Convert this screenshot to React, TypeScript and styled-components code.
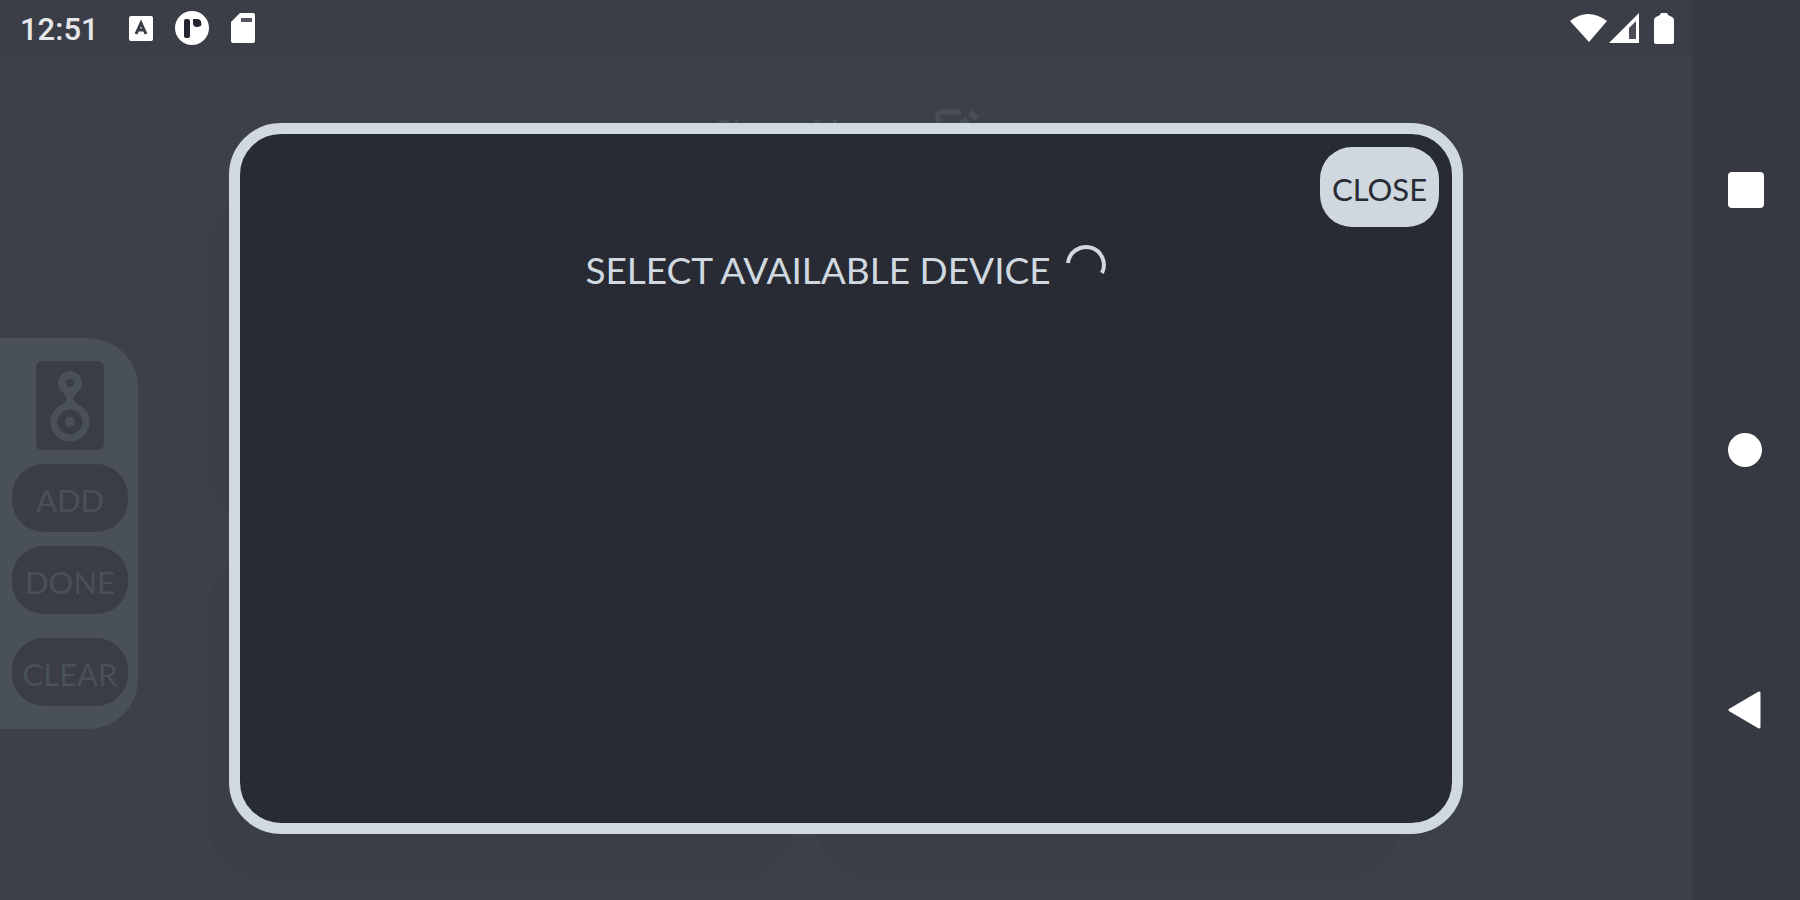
import React from "react";
import styled, { createGlobalStyle } from "styled-components";

const Global = createGlobalStyle`
  * { box-sizing: border-box; }
  html, body, #root { height: 100%; margin: 0; }
  body { background: #3d4048; font-family: Lato, "Open Sans", sans-serif; }
  button { font: inherit; border: 0; padding: 0; cursor: pointer; }
  svg { display: block; flex: none; }
`;

const Screen = styled.div`
  display: flex;
  min-height: 100%;
  background: #3d4048;
`;

const Main = styled.main`
  position: relative;
  flex: 1;
  display: flex;
  flex-direction: column;
`;

const StatusBar = styled.header`
  display: flex;
  align-items: center;
  justify-content: space-between;
  height: 56px;
  padding: 0 17px 0 20px;
  background: #3b3e47;
  color: #fff;
`;

const StatusGroup = styled.div<{ $gap: number }>`
  display: flex;
  align-items: center;
  gap: ${(p) => p.$gap}px;
`;

const Clock = styled.time`
  width: 87px;
  padding-top: 4px;
  font: 500 31px/40px Roboto, sans-serif;
  color: #e6e7ea;
`;

const ShowHeader = styled.div`
  display: flex;
  align-items: center;
  justify-content: center;
  height: 111px;
  padding-top: 40px;
  gap: 28px;
  color: #484e55;
`;

const ShowName = styled.h2`
  margin: 0;
  font-size: 37px;
  font-weight: 400;
  line-height: 48px;
`;

const EditButton = styled.button`
  display: flex;
  background: none;
  color: inherit;
`;

const Workspace = styled.div`
  flex: 1;
  display: flex;
  align-items: center;
`;

const SidePanel = styled.aside`
  display: flex;
  flex-direction: column;
  align-items: center;
  width: 138px;
  padding: 23px 10px 23px 12px;
  gap: 14px;
  border-radius: 0 50px 50px 0;
  background: #495057;
`;

const PillButton = styled.button`
  padding-top: 4px;
  border-radius: 32px;
  font-size: 31px;
  line-height: 40px;
`;

const SideButton = styled(PillButton)<{ $apart?: boolean }>`
  width: 100%;
  height: 68px;
  margin-top: ${(p) => (p.$apart ? 10 : 0)}px;
  background: #3a3d46;
  color: #485058;
`;

const CloseButton = styled(PillButton)`
  align-self: flex-end;
  width: 119px;
  height: 80px;
  background: #cfd8de;
  color: #282b33;
`;

const CardGrid = styled.div`
  flex: 1;
  align-self: stretch;
  display: grid;
  grid-template: 1fr 1fr / 1fr 1fr;
  gap: 24px;
  padding: 26px 292px 20px 71px;
`;

const Card = styled.div`
  border-radius: 56px;
  background: #3b3e46;
`;

const Overlay = styled.div`
  position: absolute;
  inset: 123px 229px 66px;
  display: flex;
`;

const Dialog = styled.section`
  flex: 1;
  display: flex;
  flex-direction: column;
  padding: 13px;
  border: 11px solid #d1d9e0;
  border-radius: 52px;
  background: #282b33;
`;

const TitleRow = styled.div`
  display: flex;
  justify-content: center;
  gap: 14px;
  margin-top: 16px;
`;

const Title = styled.h1`
  margin: 0;
  color: #d1d9e0;
  font-size: 37px;
  font-weight: 400;
  line-height: 54px;
`;

const NavBar = styled.nav`
  display: flex;
  flex-direction: column;
  align-items: center;
  justify-content: center;
  gap: 220px;
  width: 108px;
  background: #363942;
`;

const NavButton = styled.button`
  display: flex;
  background: none;
`;

function Speaker() {
  return (
    <svg width="68" height="89" viewBox="0 0 68 89" aria-hidden="true">
      <rect width="68" height="89" rx="6" fill="#3a3d46" />
      <path d="M26 29 H42 L37 38 L45 49 H23 L31 38 Z" fill="#495057" />
      <circle cx="34" cy="22" r="8" fill="#3a3d46" stroke="#495057" strokeWidth="8" />
      <circle cx="34" cy="61" r="16" fill="#3a3d46" stroke="#495057" strokeWidth="7" />
      <circle cx="34" cy="61" r="5" fill="#495057" />
    </svg>
  );
}

function EditIcon() {
  return (
    <svg width="44" height="48" viewBox="0 0 44 48" aria-hidden="true">
      <path
        d="M26 4 H6 Q3 4 3 7 V41 Q3 44 6 44 H36 Q39 44 39 41 V26"
        fill="none"
        stroke="currentColor"
        strokeWidth="5"
      />
      <path d="M14 32 V25 L30 9 L37 16 L21 32 Z" fill="currentColor" />
      <path d="M33 6 L37 2 L44 9 L40 13 Z" fill="currentColor" />
    </svg>
  );
}

function Spinner() {
  return (
    <svg width="42" height="42" viewBox="0 0 42 42" role="img" aria-label="Searching">
      <path
        d="M3 20 A18 18 0 1 1 37 30"
        fill="none"
        stroke="#d1d9e0"
        strokeWidth="4"
      />
    </svg>
  );
}

function KeyboardIcon() {
  return (
    <svg width="24" height="26" viewBox="0 0 24 26" aria-hidden="true">
      <rect y="1" width="24" height="25" rx="2" fill="#fff" />
      <path d="M7 19 L12 8 L17 19 M9 15 H15" fill="none" stroke="#3b3e47" strokeWidth="3" />
    </svg>
  );
}

function AppIcon() {
  return (
    <svg width="34" height="34" viewBox="0 0 34 34" aria-hidden="true">
      <circle cx="17" cy="17" r="17" fill="#fff" />
      <rect x="9" y="8" width="6" height="19" rx="2" fill="#23262e" />
      <path d="M18 8 H21 A5 5 0 0 1 26 15 H24 A5 5 0 0 0 18 12 Z" fill="#23262e" />
      <circle cx="22" cy="12" r="4" fill="#23262e" />
    </svg>
  );
}

function SdCardIcon() {
  return (
    <svg width="24" height="30" viewBox="0 0 24 30" aria-hidden="true">
      <path d="M9 0 H22 Q24 0 24 2 V28 Q24 30 22 30 H2 Q0 30 0 28 V9 Z" fill="#fff" />
      <rect x="10" y="5" width="11" height="4" fill="#53565e" />
    </svg>
  );
}

function WifiIcon() {
  return (
    <svg width="37" height="30" viewBox="0 0 37 30" aria-hidden="true">
      <path d="M0 8 Q18 -6 37 8 L19 29 Z" fill="#fff" />
    </svg>
  );
}

function SignalIcon() {
  return (
    <svg width="31" height="30" viewBox="0 0 31 30" aria-hidden="true">
      <path d="M30 0 V30 H0 Z" fill="#fff" />
      <path d="M27 8 V26 H20 V15 Z" fill="#4b4e56" />
    </svg>
  );
}

function BatteryIcon() {
  return (
    <svg width="22" height="32" viewBox="0 0 22 32" aria-hidden="true">
      <path
        d="M7 3 L8 1 H14 L15 3 L19 5 Q21 6 21 8 V30 Q21 32 19 32 H3 Q1 32 1 30 V8 Q1 6 3 5 Z"
        fill="#fff"
      />
    </svg>
  );
}

export default function App() {
  return (
    <Screen>
      <Global />
      <Main>
        <StatusBar>
          <StatusGroup $gap={22}>
            <Clock>12:51</Clock>
            <KeyboardIcon />
            <AppIcon />
            <SdCardIcon />
          </StatusGroup>
          <StatusGroup $gap={2}>
            <WifiIcon />
            <StatusGroup $gap={13}>
              <SignalIcon />
              <BatteryIcon />
            </StatusGroup>
          </StatusGroup>
        </StatusBar>
        <ShowHeader>
          <ShowName>Show Name</ShowName>
          <EditButton aria-label="Edit name">
            <EditIcon />
          </EditButton>
        </ShowHeader>
        <Workspace>
          <SidePanel>
            <Speaker />
            <SideButton>ADD</SideButton>
            <SideButton>DONE</SideButton>
            <SideButton $apart>CLEAR</SideButton>
          </SidePanel>
          <CardGrid>
            <Card />
            <Card />
            <Card />
            <Card />
          </CardGrid>
        </Workspace>
        <Overlay>
          <Dialog role="dialog" aria-labelledby="device-title">
            <CloseButton>CLOSE</CloseButton>
            <TitleRow>
              <Title id="device-title">SELECT AVAILABLE DEVICE</Title>
              <Spinner />
            </TitleRow>
          </Dialog>
        </Overlay>
      </Main>
      <NavBar>
        <NavButton aria-label="Recent apps">
          <svg width="36" height="40" viewBox="0 0 36 40">
            <rect y="2" width="36" height="36" rx="4" fill="#fff" />
          </svg>
        </NavButton>
        <NavButton aria-label="Home">
          <svg width="36" height="40" viewBox="0 0 36 40">
            <circle cx="17" cy="20" r="17" fill="#fff" />
          </svg>
        </NavButton>
        <NavButton aria-label="Back">
          <svg width="36" height="40" viewBox="0 0 36 40">
            <path
              d="M2 20 L31 3 V37 Z"
              fill="#fff"
              stroke="#fff"
              strokeWidth="3"
              strokeLinejoin="round"
            />
          </svg>
        </NavButton>
      </NavBar>
    </Screen>
  );
}
